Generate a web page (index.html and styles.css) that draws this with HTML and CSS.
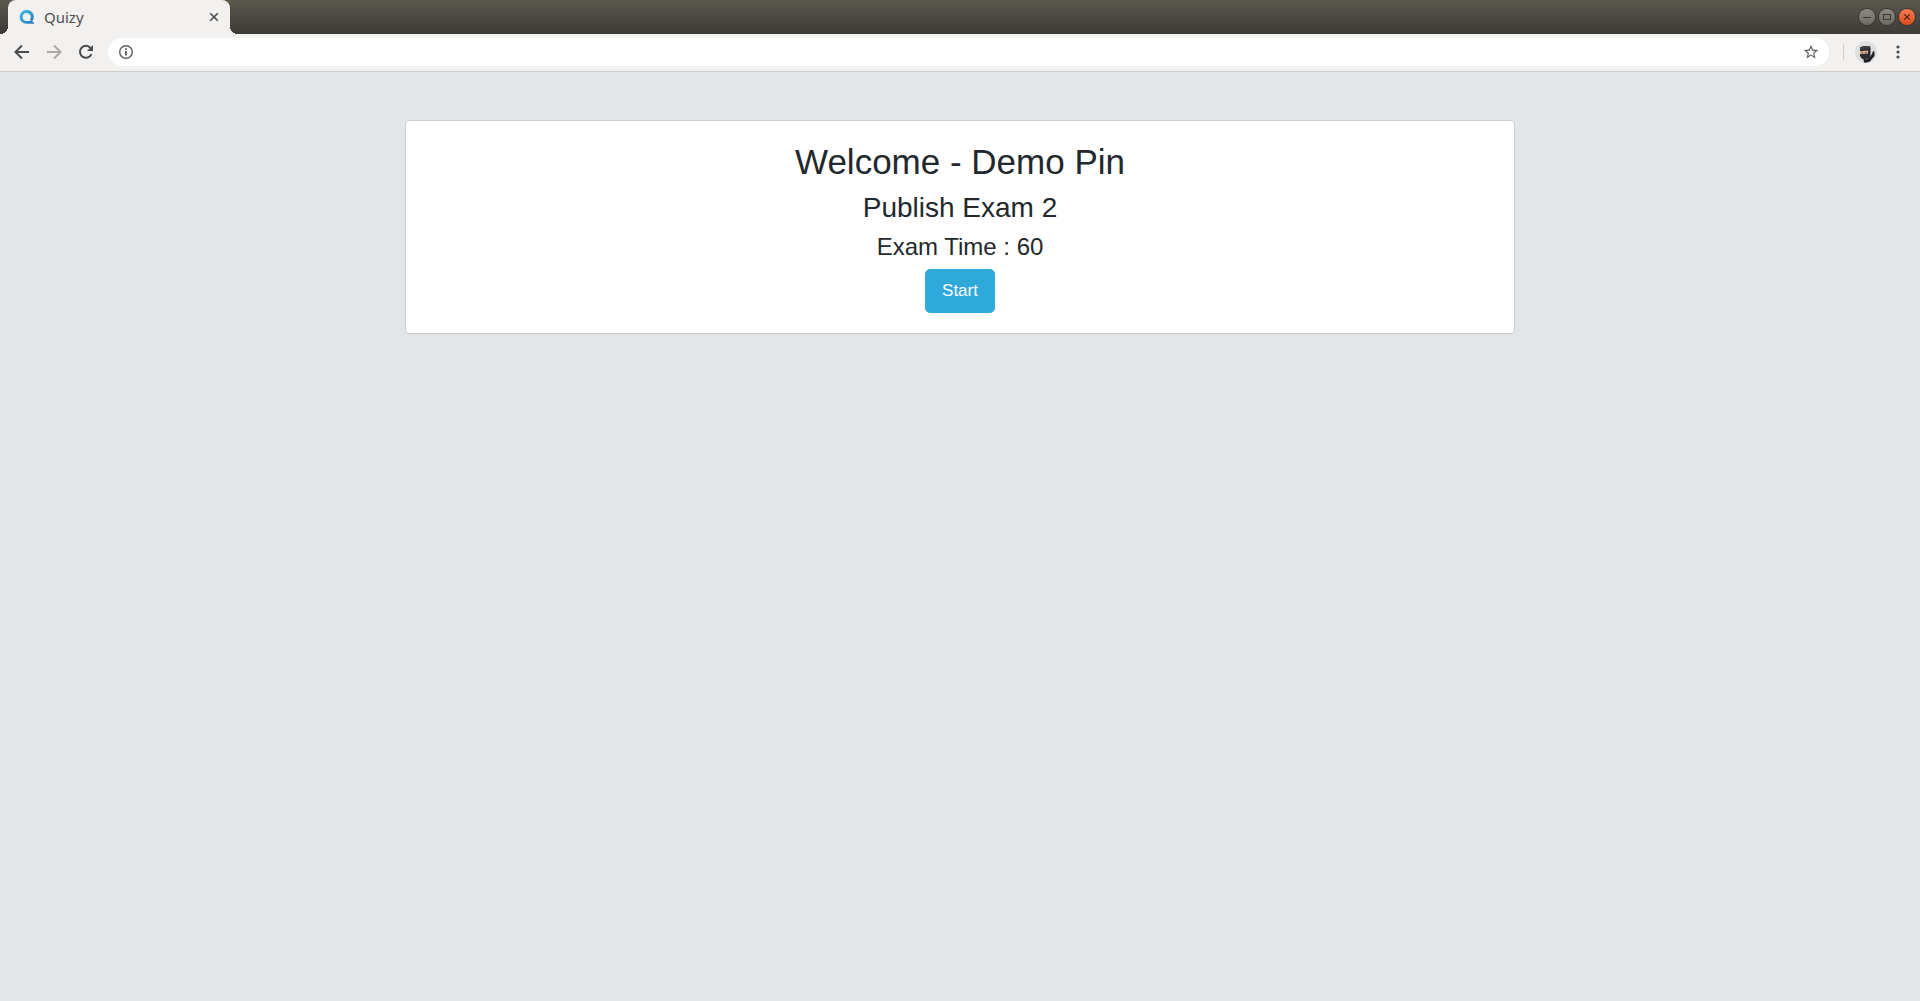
FILE: index.html
```html
<!DOCTYPE html>
<html lang="en">
<head>
  <meta charset="UTF-8">
  <meta name="viewport" content="width=device-width, initial-scale=1.0">
  <title>Quizy</title>
  <link rel="stylesheet" href="styles.css">
</head>
<body>

  <!-- Title bar -->
  <header class="titlebar">
    <div class="tab">
      <svg class="tab-logo" width="16" height="16" viewBox="0 0 16 16">
        <defs>
          <linearGradient id="logoFill" x1="0" y1="0" x2="1" y2="1">
            <stop offset="0" stop-color="#35c3e6"/>
            <stop offset="1" stop-color="#2f72b8"/>
          </linearGradient>
        </defs>
        <path fill="url(#logoFill)" fill-rule="evenodd" d="M7.500 1A6.800 6.800 0 0 0 7.500 14.800H15.500L13.300 12A6.800 6.800 0 0 0 7.500 1ZM7.700 3.900A4 4 0 0 1 11 10.200L11.800 12H7.700A4 4 0 0 1 7.700 3.900Z"/>
      </svg>
      <span class="tab-title">Quizy</span>
      <button type="button" class="tab-close" aria-label="Close tab">
        <svg width="10" height="10" viewBox="0 0 10 10"><path d="M1.200 1.200l7.600 7.600M8.800 1.200l-7.600 7.600" stroke="#4a4b4a" stroke-width="1.600"/></svg>
      </button>
    </div>
    <div class="window-buttons">
      <button type="button" class="window-button" aria-label="Minimize">
        <svg width="16" height="16" viewBox="0 0 16 16"><path d="M4 8.500h8" stroke="#3b3a36"/></svg>
      </button>
      <button type="button" class="window-button" aria-label="Maximize">
        <svg width="16" height="16" viewBox="0 0 16 16"><rect x="4.500" y="5.500" width="7" height="5" fill="none" stroke="#3b3a36"/></svg>
      </button>
      <button type="button" class="window-button window-button-close" aria-label="Close">
        <svg width="16" height="16" viewBox="0 0 16 16"><path d="M5.300 5.300l5.400 5.400M10.700 5.300l-5.400 5.400" stroke="#4a2214" stroke-width="1.200"/></svg>
      </button>
    </div>
  </header>

  <!-- Toolbar -->
  <nav class="toolbar">
    <button type="button" class="nav-button" aria-label="Back">
      <svg width="20" height="20" viewBox="0 0 20 20"><path d="M17 10H4.500M10 3.500L3.500 10l6.500 6.500" fill="none" stroke="#4b4c4d" stroke-width="2"/></svg>
    </button>
    <button type="button" class="nav-button" aria-label="Forward">
      <svg width="20" height="20" viewBox="0 0 20 20"><path d="M3 10h12.500M10 3.500l6.500 6.500-6.500 6.500" fill="none" stroke="#aaa9a8" stroke-width="2"/></svg>
    </button>
    <button type="button" class="nav-button" aria-label="Reload">
      <svg width="20" height="20" viewBox="0 0 20 20"><path d="M15.500 12.200A6 6 0 1 1 14.600 6" fill="none" stroke="#4b4c4d" stroke-width="2"/><path d="M17 3v6h-6z" fill="#4b4c4d"/></svg>
    </button>
    <div class="address-bar">
      <svg width="16" height="16" viewBox="0 0 16 16">
        <circle cx="8" cy="8" r="6.300" fill="none" stroke="#5c5d5e" stroke-width="1.400"/>
        <path d="M8 7v4.500M8 4.200v1.700" stroke="#5c5d5e" stroke-width="1.800"/>
      </svg>
      <input type="text" class="address-input" aria-label="Address">
      <button type="button" class="star-button" aria-label="Bookmark this page">
        <svg width="16" height="16" viewBox="1 1 22 22"><path fill="#5c5d5e" d="M22 9.240l-7.190-.620L12 2 9.190 8.630 2 9.240l5.460 4.730L5.820 21 12 17.270 18.180 21l-1.630-7.030L22 9.240zM12 15.400l-3.760 2.270 1-4.280-3.320-2.880 4.380-.380L12 6.100l1.710 4.040 4.380.380-3.320 2.880 1 4.280L12 15.400z"/></svg>
      </button>
    </div>
    <span class="divider"></span>
    <button type="button" class="avatar" aria-label="Profile">
      <svg width="22" height="22" viewBox="0 0 22 22">
        <circle cx="11" cy="11" r="11" fill="#dededf"/>
        <path d="M8 16h7l2-3 1-3 1.500 1v4l-3 3.500-1.500 2q-3 1.500-6 1z" fill="#202224"/>
        <path d="M5 6.500L8 5.200 15 5l.5 2V16l-2 2H7l-2-3z" fill="#2a2c2f"/>
        <path d="M5 6.500L8 5.200 15 5v2L5 9z" fill="#3c3e42"/>
        <path d="M5 10.200l8-.7v3l-8 .5z" fill="#e4b596"/>
        <path d="M6.500 11.500h1.500M10 11.300h1.500" stroke="#5b4a40"/>
        <path d="M10 18.500l3-1" stroke="#505357"/>
      </svg>
    </button>
    <button type="button" class="menu-button" aria-label="Menu">
      <svg width="16" height="16" viewBox="0 0 16 16" fill="#4b4c4d"><circle cx="8" cy="3" r="1.600"/><circle cx="8" cy="8" r="1.600"/><circle cx="8" cy="13" r="1.600"/></svg>
    </button>
  </nav>

  <!-- Exam card -->
  <main class="container">
    <div class="card">
      <h1>Welcome - Demo Pin</h1>
      <h2>Publish Exam 2</h2>
      <h3>Exam Time : 60</h3>
      <button type="button" class="start-button">Start</button>
    </div>
  </main>

</body>
</html>
```

FILE: styles.css
```css
* {
  box-sizing: border-box;
}

body {
  margin: 0;
  background-color: #e4e5e6;
  color: #23282c;
  font-family: "Liberation Sans", Arial, sans-serif;
}

button {
  margin: 0;
  padding: 0;
  border: none;
  background: none;
  font-family: inherit;
  cursor: pointer;
}

svg {
  display: block;
}

/* Title bar */
.titlebar {
  display: flex;
  justify-content: space-between;
  align-items: center;
  height: 34px;
  padding: 0 5px 0 8px;
  background: linear-gradient(#5b584e, #3c3b37);
}

.tab {
  position: relative;
  display: flex;
  align-items: center;
  width: 222px;
  height: 34px;
  padding: 0 11px;
  border-radius: 8px 8px 0 0;
  background-color: #f2f1f0;
}

/* Curved feet on both sides of the tab */
.tab::before,
.tab::after {
  content: "";
  position: absolute;
  bottom: 0;
  width: 8px;
  height: 8px;
}

.tab::before {
  left: -8px;
  background: radial-gradient(circle at 0 0, transparent 8px, #f2f1f0 8px);
}

.tab::after {
  right: -8px;
  background: radial-gradient(circle at 100% 0, transparent 8px, #f2f1f0 8px);
}

.tab-title {
  flex: 1;
  margin-left: 9px;
  color: #4f4f4e;
  font-family: "Noto Sans", sans-serif;
  font-size: 15px;
  line-height: 20px;
}

.window-buttons {
  display: flex;
  gap: 4px;
}

.window-button {
  width: 16px;
  height: 16px;
  border-radius: 50%;
  background: linear-gradient(#8d8a83, #6b6963);
  box-shadow: 0 0 0 1px #35342f;
}

.window-button-close {
  background: linear-gradient(#f37b52, #de4c1c);
}

/* Toolbar */
.toolbar {
  display: flex;
  align-items: center;
  height: 38px;
  padding: 0 14px 1px 12px;
  border-bottom: 1px solid #cccbc8;
  background-color: #f2f1f0;
}

.nav-button {
  margin-right: 12px;
}

.address-bar {
  display: flex;
  flex: 1;
  align-items: center;
  height: 28px;
  padding: 0 10px;
  border-radius: 14px;
  background-color: #fff;
}

.address-input {
  flex: 1;
  margin: 0 8px;
  border: none;
  outline: none;
  background: none;
  font-size: 14px;
}

.divider {
  width: 1px;
  height: 16px;
  margin: 0 11px 0 14px;
  background-color: #cfcecc;
}

.menu-button {
  margin-left: 13px;
}

/* Exam card */
.container {
  max-width: 1140px;
  margin: 48px auto 0;
  padding: 0 15px;
}

.card {
  padding: 20px;
  border: 1px solid #c8ced3;
  border-radius: 4px;
  background-color: #fff;
  text-align: center;
}

h1,
h2,
h3 {
  margin: 0 0 8px;
  font-weight: 500;
}

h1 {
  font-size: 35px;
  line-height: 42px;
}

h2 {
  font-size: 28px;
  line-height: 34px;
}

h3 {
  font-size: 24px;
  line-height: 28px;
}

.start-button {
  padding: 9px 16px;
  border: 1px solid #2fa9da;
  border-radius: 5px;
  background-color: #2fa9da;
  color: #fff;
  font-size: 17px;
  line-height: 24px;
}
```
